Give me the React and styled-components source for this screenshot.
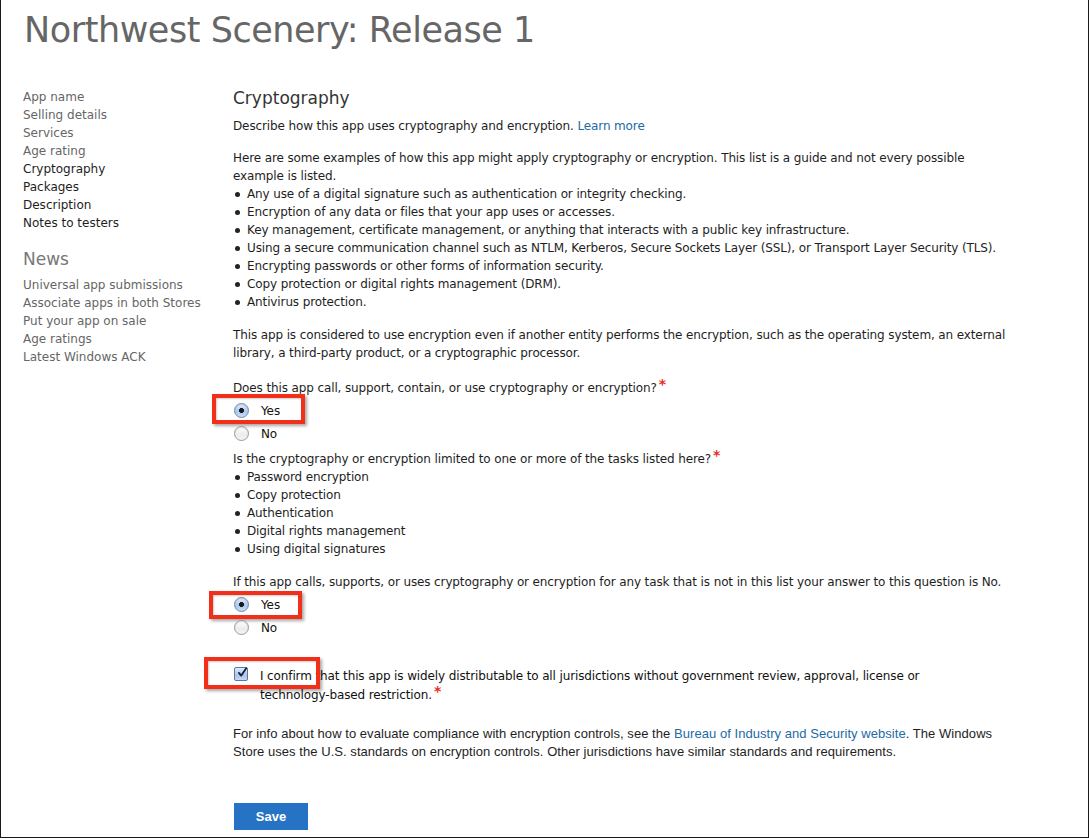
import React from 'react';
import styled, { createGlobalStyle } from 'styled-components';

const GlobalStyle = createGlobalStyle`
  html, body {
    margin: 0;
    padding: 0;
    background: #ffffff;
  }
  * {
    box-sizing: border-box;
  }
`;

const Page = styled.div`
  width: 1089px;
  height: 838px;
  border-left: 1px solid #1a1a1a;
  border-right: 1px solid #1a1a1a;
  border-bottom: 1px solid #1a1a1a;
  background: #ffffff;
  font-family: "DejaVu Sans", "Noto Sans", sans-serif;
  font-size: 12px;
  line-height: 18px;
  color: #1e1e1e;
  overflow: hidden;
`;

const Title = styled.h1`
  margin: 0;
  padding: 10px 0 0 23px;
  height: 50px;
  font-size: 35px;
  line-height: 40px;
  font-weight: normal;
  letter-spacing: -0.45px;
  color: #666;
`;

const Body = styled.div`
  display: flex;
  margin-top: 38px;
`;

const Sidebar = styled.nav`
  width: 232px;
  flex: none;
  padding-left: 22px;
`;

const NavList = styled.ul`
  list-style: none;
  margin: 0;
  padding: 0;
`;

const NavItem = styled.li`
  color: ${(p) => (p.$done ? '#1e1e1e' : '#666')};
  white-space: nowrap;
`;

const NavHeading = styled.h2`
  margin: 16px 0 6px;
  font-size: 17px;
  line-height: 22px;
  font-weight: normal;
  color: #777;
`;

const Main = styled.main`
  flex: 1;
  letter-spacing: -0.12px;
`;

const Heading = styled.h2`
  margin: -1px 0 0;
  font-size: 17px;
  line-height: 22px;
  font-weight: normal;
  letter-spacing: 0;
  color: #333;
`;

const Para = styled.p`
  margin: ${(p) => p.$mt || 0}px 0 0;
  white-space: nowrap;
`;

const Link = styled.a`
  color: #1d6aa5;
  text-decoration: none;
`;

const Bullets = styled.ul`
  list-style: none;
  margin: 0;
  padding: 0;
`;

const Bullet = styled.li`
  display: flex;
  white-space: nowrap;

  &::before {
    content: '';
    flex: none;
    width: 5px;
    height: 5px;
    border-radius: 50%;
    background: #222;
    margin: 7px 7px 0 2px;
  }
`;

const Req = styled.span`
  color: #ec2a24;
  font-size: 14px;
  font-weight: bold;
  vertical-align: 3px;
  margin-left: 2px;
  line-height: 0;
`;

const Options = styled.div`
  margin-top: ${(p) => p.$mt}px;
`;

const OptionRow = styled.label`
  position: relative;
  display: flex;
  align-items: center;
  height: 23px;
  padding-left: 1px;
  gap: 12px;
  color: #111;
`;

const Radio = styled.span`
  width: 15px;
  height: 15px;
  flex: none;
  border-radius: 50%;
  border: 1px solid ${(p) => (p.$checked ? '#6d88b0' : '#9a9a9a')};
  background: ${(p) =>
    p.$checked
      ? 'radial-gradient(circle at 50% 50%, #1a1a1a 0 2.2px, transparent 2.8px), linear-gradient(#e4eefb, #a9c8ef 60%, #c8def7)'
      : 'linear-gradient(#ffffff, #ececec 60%, #f4f4f4)'};
  box-shadow: inset 0 1px 1px rgba(0, 0, 0, 0.12);
`;

const Highlight = styled.span`
  position: absolute;
  top: ${(p) => p.$top}px;
  left: ${(p) => p.$left}px;
  width: ${(p) => p.$width}px;
  height: ${(p) => p.$height}px;
  border: 4px solid #f2301a;
  box-shadow: 2px 2px 3px rgba(0, 0, 0, 0.35), inset 1px 1px 2px rgba(0, 0, 0, 0.2);
  pointer-events: none;
`;

const ConfirmRow = styled.div`
  position: relative;
  display: flex;
  gap: 12px;
  margin-top: 28px;
  line-height: 19px;
  color: #111;
`;

const CheckBox = styled.span`
  width: 14px;
  height: 14px;
  flex: none;
  margin: 0 0 0 1px;
  border: 1px solid #5d76a3;
  border-radius: 2px;
  background: linear-gradient(#e3edfb, #a7c4ec 60%, #c7dbf5);
  display: flex;
  align-items: center;
  justify-content: center;
`;

const Footnote = styled.p`
  margin: 20px 0 0;
  font-family: "Liberation Sans", Arial, sans-serif;
  font-size: 13px;
  line-height: 18px;
  letter-spacing: 0.05px;
  white-space: nowrap;
  color: #1e1e1e;
`;

const SaveButton = styled.button`
  display: block;
  margin: 42px 0 0 1px;
  width: 74px;
  height: 27px;
  border: none;
  background: #2672c4;
  color: #fff;
  font-family: "Liberation Sans", Arial, sans-serif;
  font-weight: bold;
  font-size: 13px;
  padding: 0;
`;

const Check = () => (
  <svg width="13" height="13" viewBox="0 0 13 13" style={{ marginTop: -4, marginLeft: 2 }}>
    <path d="M2.5 7 L5.5 10.5 L12 1" fill="none" stroke="#14213d" strokeWidth="2.4" strokeLinecap="round" strokeLinejoin="round" />
  </svg>
);

const steps = ['App name', 'Selling details', 'Services', 'Age rating'];
const todo = ['Cryptography', 'Packages', 'Description', 'Notes to testers'];
const news = [
  'Universal app submissions',
  'Associate apps in both Stores',
  'Put your app on sale',
  'Age ratings',
  'Latest Windows ACK',
];

const examples = [
  'Any use of a digital signature such as authentication or integrity checking.',
  'Encryption of any data or files that your app uses or accesses.',
  'Key management, certificate management, or anything that interacts with a public key infrastructure.',
  'Using a secure communication channel such as NTLM, Kerberos, Secure Sockets Layer (SSL), or Transport Layer Security (TLS).',
  'Encrypting passwords or other forms of information security.',
  'Copy protection or digital rights management (DRM).',
  'Antivirus protection.',
];

const tasks = [
  'Password encryption',
  'Copy protection',
  'Authentication',
  'Digital rights management',
  'Using digital signatures',
];

const YesNo = ({ mt, box }) => (
  <Options $mt={mt}>
    <OptionRow>
      <Radio $checked />
      Yes
      <Highlight {...box} />
    </OptionRow>
    <OptionRow>
      <Radio />
      No
    </OptionRow>
  </Options>
);

export default function App() {
  return (
    <Page>
      <GlobalStyle />
      <Title>Northwest Scenery: Release 1</Title>
      <Body>
        <Sidebar>
          <NavList>
            {steps.map((s) => (
              <NavItem key={s}>{s}</NavItem>
            ))}
            {todo.map((s) => (
              <NavItem key={s} $done>
                {s}
              </NavItem>
            ))}
          </NavList>
          <NavHeading>News</NavHeading>
          <NavList>
            {news.map((s) => (
              <NavItem key={s}>{s}</NavItem>
            ))}
          </NavList>
        </Sidebar>
        <Main>
          <Heading>Cryptography</Heading>
          <Para $mt={8}>
            Describe how this app uses cryptography and encryption. <Link>Learn more</Link>
          </Para>
          <Para $mt={14}>
            Here are some examples of how this app might apply cryptography or encryption. This list is a guide and not every possible
            <br />
            example is listed.
          </Para>
          <Bullets>
            {examples.map((e) => (
              <Bullet key={e}>{e}</Bullet>
            ))}
          </Bullets>
          <Para $mt={15}>
            This app is considered to use encryption even if another entity performs the encryption, such as the operating system, an external
            <br />
            library, a third-party product, or a cryptographic processor.
          </Para>
          <Para $mt={17}>
            Does this app call, support, contain, or use cryptography or encryption?<Req>*</Req>
          </Para>
          <YesNo mt={2} box={{ $top: -5, $left: -21, $width: 93, $height: 30 }} />
          <Para $mt={5}>
            Is the cryptography or encryption limited to one or more of the tasks listed here?<Req>*</Req>
          </Para>
          <Bullets>
            {tasks.map((t) => (
              <Bullet key={t}>{t}</Bullet>
            ))}
          </Bullets>
          <Para $mt={15}>
            If this app calls, supports, or uses cryptography or encryption for any task that is not in this list your answer to this question is No.
          </Para>
          <YesNo mt={2} box={{ $top: -2, $left: -24, $width: 93, $height: 28 }} />
          <ConfirmRow>
            <CheckBox>
              <Check />
            </CheckBox>
            <span>
              I confirm that this app is widely distributable to all jurisdictions without government review, approval, license or
              <br />
              technology-based restriction.<Req>*</Req>
            </span>
            <Highlight $top={-10} $left={-29} $width={116} $height={32} />
          </ConfirmRow>
          <Footnote>
            For info about how to evaluate compliance with encryption controls, see the{' '}
            <Link>Bureau of Industry and Security website</Link>. The Windows
            <br />
            Store uses the U.S. standards on encryption controls. Other jurisdictions have similar standards and requirements.
          </Footnote>
          <SaveButton>Save</SaveButton>
        </Main>
      </Body>
    </Page>
  );
}
